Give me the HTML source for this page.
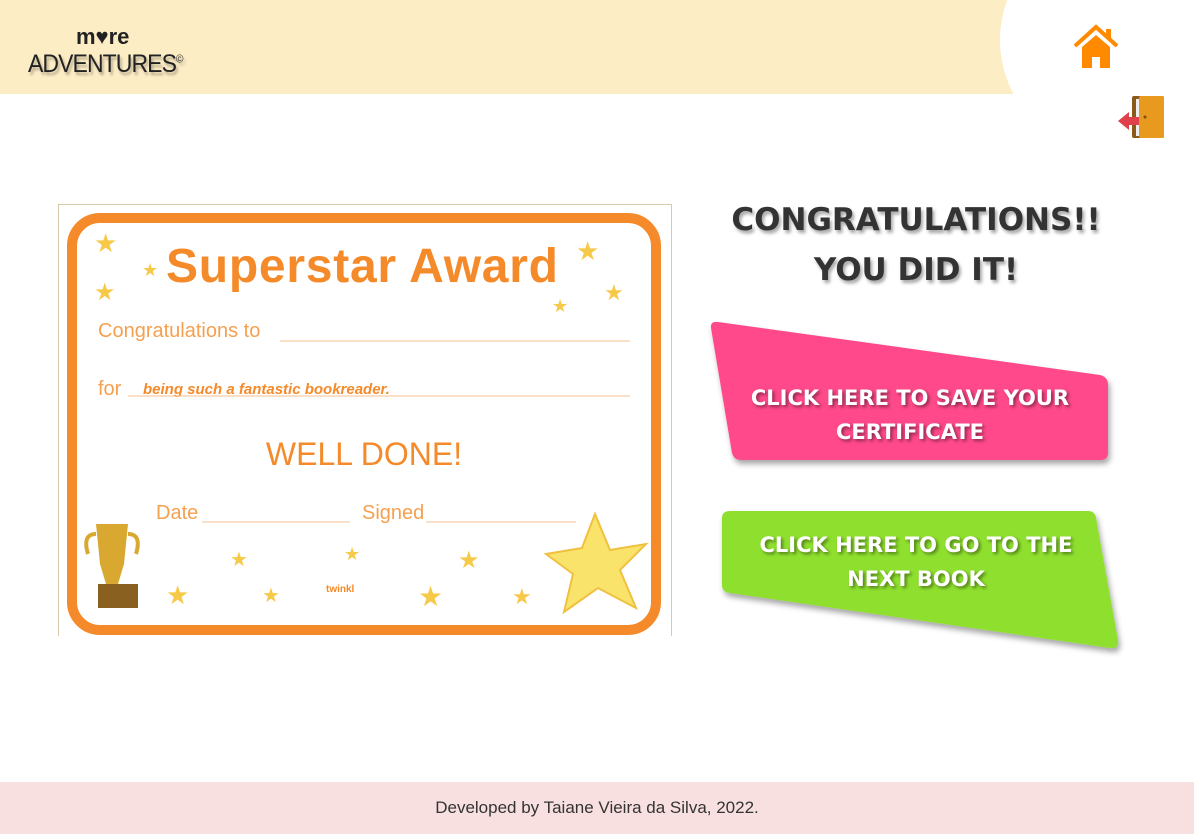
<!DOCTYPE html>
<html><head><meta charset="utf-8"><style>
body{margin:0;width:1194px;height:834px;position:relative;background:#fff;font-family:"Liberation Sans",sans-serif;overflow:hidden}
.hdr{position:absolute;left:0;top:0;width:1194px;height:94px;background:#fdedc5}
.circ{position:absolute;left:1000px;top:-110px;width:400px;height:300px;border-radius:50%;background:#fff}
.h{position:absolute;font-family:"DejaVu Sans",sans-serif;font-weight:900;color:#333;text-shadow:2px 3px 3px rgba(0,0,0,.35);text-align:center;width:420px;left:706px}
.bt{position:absolute;color:#fff;font-family:"DejaVu Sans",sans-serif;font-weight:900;font-size:21px;line-height:34px;text-align:center;text-shadow:2px 2px 3px rgba(0,0,0,.45)}
.foot{position:absolute;left:0;top:782px;width:1194px;height:52px;background:#f9e0e0;text-align:center;line-height:52px;font-size:17px;color:#333}
</style></head><body>
<div class="hdr"></div><div class="circ"></div>
<div style="position:absolute;left:76px;top:24px;font-size:22px;font-weight:bold;color:#222;letter-spacing:0">m♥re</div>
<div style="position:absolute;left:28px;top:50px;font-size:25px;color:#222;letter-spacing:-1px;transform:scaleX(.92);transform-origin:left;text-shadow:2px 3px 3px rgba(0,0,0,.3)">ADVENTURES<sup style="font-size:11px">©</sup></div>
<svg style="position:absolute;left:1072px;top:24px" width="48" height="46" viewBox="0 0 48 46"><path d="M3 22 L24 3 L45 22" fill="none" stroke="#ff8a00" stroke-width="4"/><rect x="34" y="5" width="5" height="10" fill="#ff8a00"/><path d="M10 23 L24 11 L38 23 V44 H28 V33 H20 V44 H10 Z" fill="#ff8a00"/></svg>
<svg style="position:absolute;left:1117px;top:94px" width="50" height="46"><rect x="15" y="2" width="32" height="42" rx="2" fill="#8b5a1a"/><rect x="19" y="5" width="8" height="37" fill="#eee"/><rect x="22" y="2" width="25" height="42" rx="2" fill="#e89a1e"/><circle cx="28" cy="23" r="1.5" fill="#7a4a10"/><path d="M1 27 L12 18 V23 H22 V31 H12 V36 Z" fill="#e0404a"/></svg>
<svg style="position:absolute;left:58px;top:204px" width="614" height="432" viewBox="0 0 614 432">
<rect x="0.5" y="0.5" width="613" height="440" fill="#fff" stroke="#d9c9a9"/>
<rect x="14" y="14" width="584" height="412" rx="28" fill="#fff" stroke="#f58a2a" stroke-width="10"/>
<text x="304" y="78" text-anchor="middle" font-size="48" font-weight="bold" fill="#f58a2a" font-family="Liberation Sans" textLength="392">Superstar Award</text>
<text x="40" y="133" font-size="20" fill="#f5a050">Congratulations to</text><line x1="222" y1="137" x2="572" y2="137" stroke="#f5c090"/>
<text x="40" y="191" font-size="20" fill="#f5a050">for</text><text x="85" y="190" font-size="15" font-style="italic" font-weight="bold" fill="#f58a2a">being such a fantastic bookreader.</text><line x1="70" y1="192" x2="572" y2="192" stroke="#f5c090"/>
<text x="306" y="261" text-anchor="middle" font-size="32" fill="#f58a2a">WELL DONE!</text>
<text x="98" y="315" font-size="20" fill="#f5a050">Date</text><line x1="144" y1="318" x2="292" y2="318" stroke="#f5c090"/>
<text x="304" y="315" font-size="20" fill="#f5a050">Signed</text><line x1="368" y1="318" x2="518" y2="318" stroke="#f5c090"/>
<g fill="#f7c948"><text x="36" y="48" font-size="26">★</text><text x="84" y="72" font-size="18">★</text><text x="36" y="96" font-size="24">★</text><text x="518" y="56" font-size="26">★</text><text x="546" y="96" font-size="22">★</text><text x="494" y="108" font-size="18">★</text><text x="172" y="362" font-size="20">★</text><text x="286" y="356" font-size="18">★</text><text x="400" y="364" font-size="24">★</text><text x="108" y="400" font-size="26">★</text><text x="204" y="398" font-size="20">★</text><text x="360" y="402" font-size="28">★</text><text x="454" y="400" font-size="22">★</text></g>
<path d="M537 310 L552 346 L588 340 L562 366 L578 404 L540 384 L506 408 L515 370 L488 350 L524 344 Z" fill="#fae36a" stroke="#f0c040" stroke-width="2"/>
<path d="M38 320 H70 L66 360 L60 380 H48 L42 360 Z" fill="#d9a830"/><rect x="40" y="380" width="40" height="24" fill="#8a6020"/><path d="M38 330 Q24 330 30 350 M70 330 Q84 330 78 350" stroke="#d9a830" stroke-width="4" fill="none"/>
<text x="268" y="388" font-size="10" font-weight="bold" fill="#f58a2a">twinkl</text>
</svg>
<div class="h" style="top:202px;font-size:31px">CONGRATULATIONS!!</div>
<div class="h" style="top:252px;font-size:31px">YOU DID IT!</div>
<svg style="position:absolute;left:700px;top:310px" width="440" height="360">
<defs><filter id="s"><feDropShadow dx="2" dy="4" stdDeviation="3" flood-opacity=".35"/></filter></defs>
<path d="M11 18 Q10 11 18 12 L400 65 Q408 67 408 75 L408 143 Q408 150 400 150 L41 150 Q34 150 32 143 Z" fill="#ff4a8a" filter="url(#s)"/>
<path d="M22 208 Q22 201 30 201 L388 201 Q395 201 396 208 L418 330 Q419 339 410 338 L30 283 Q22 282 22 275 Z" fill="#8fe02e" filter="url(#s)"/>
</svg>
<div class="bt" style="left:720px;top:381px;width:380px">CLICK HERE TO SAVE YOUR<br>CERTIFICATE</div>
<div class="bt" style="left:726px;top:528px;width:380px">CLICK HERE TO GO TO THE<br>NEXT BOOK</div>
<div class="foot">Developed by Taiane Vieira da Silva, 2022.</div>
</body></html>
